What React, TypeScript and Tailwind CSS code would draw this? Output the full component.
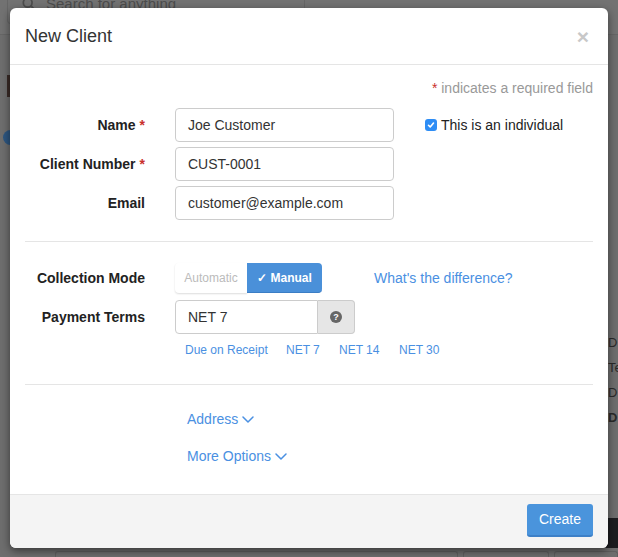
import React from "react";

function Chevron() {
  return (
    <svg className="ml-[4px] mt-[1px] h-[7px] w-[12px]" viewBox="0 0 12 7" fill="none" stroke="currentColor" strokeWidth={1.5}>
      <path strokeLinecap="round" strokeLinejoin="round" d="M1 1l5 5 5-5" />
    </svg>
  );
}

function Label({ text, required = false }: { text: string; required?: boolean }) {
  return (
    <div className="w-[120px] shrink-0 text-right text-[14px] font-bold text-[#222]">
      {text}
      {required && <span className="ml-[4px] text-[#c9302c]">*</span>}
    </div>
  );
}

function TextInput({ value }: { value: string }) {
  return (
    <div className="ml-[30px] flex h-[34px] w-[219px] items-center rounded-[4px] border border-[#ccc] bg-white pl-[12px] text-[14px] text-[#333]">
      {value}
    </div>
  );
}

export default function App() {
  return (
    <div className="relative h-[557px] w-[618px] overflow-hidden bg-[#6e6e6e] font-['Liberation_Sans',Arial,sans-serif]">
      {/* dimmed page behind the modal */}
      <div className="flex h-[35px] items-start border-b border-[#666] bg-[#727272] pl-[7px]">
        <div className="flex h-[24px] w-[298px] items-start rounded-b-[4px] border border-t-0 border-[#666] pl-[14px] text-[15px] text-[#4c4c4c]">
          <div className="-mt-[5px] flex items-center gap-[10px] leading-[18px]">
            <svg className="h-[14px] w-[14px]" viewBox="0 0 16 16" fill="none" stroke="currentColor" strokeWidth={2}>
              <circle cx="6.5" cy="6.5" r="5" />
              <path d="M10.5 10.5l4 4" strokeLinecap="round" />
            </svg>
            Search for anything
          </div>
        </div>
      </div>
      <div className="flex">
        <div className="w-[10px]">
          <div className="mt-[40px] h-[22px] w-[3px] translate-x-[7px] bg-[#3a2b27]" />
          <div className="mt-[33px] h-[15px] w-[15px] translate-x-[3px] rounded-full bg-[#2d5680]" />
        </div>
        <div className="ml-auto w-[10px] pt-[295px] text-[13px] leading-[25px] text-[#2a2a2a]">
          <div>D</div>
          <div>Te</div>
          <div>D</div>
          <div className="font-bold">D</div>
        </div>
      </div>
      <div className="absolute bottom-0 left-0 flex h-[6px] w-full gap-[5px] pl-[55px]">
        <div className="w-[403px] rounded-t-[3px] border border-b-0 border-[#5f5f5f]" />
        <div className="w-[86px] rounded-t-[3px] border border-b-0 border-[#5f5f5f]" />
        <div className="flex-1 rounded-t-[3px] border border-b-0 border-[#5f5f5f]" />
      </div>
      <div className="absolute right-0 top-[518px] h-[30px] w-[12px] bg-[#1c1d20]" />

      {/* modal */}
      <div className="absolute left-[10px] top-[8px] w-[598px] overflow-hidden rounded-[6px] bg-white shadow-[0_3px_9px_rgba(0,0,0,0.5)]">
        <div className="flex h-[57px] items-center justify-between border-b border-[#e5e5e5] pl-[15px] pr-[19px]">
          <div className="text-[18px] text-[#333]">New Client</div>
          <div className="text-[21px] font-bold leading-none text-[#c8c8c8]">×</div>
        </div>

        <div className="px-[15px]">
          <div className="pt-[13px] text-right text-[14px] leading-[20px] text-[#999]">
            <span className="text-[#c9302c]">*</span> indicates a required field
          </div>

          <div className="mt-[10px] flex">
            <div className="flex flex-col gap-[5px]">
              <div className="flex items-center">
                <Label text="Name" required />
                <TextInput value="Joe Customer" />
              </div>
              <div className="flex items-center">
                <Label text="Client Number" required />
                <TextInput value="CUST-0001" />
              </div>
              <div className="flex items-center">
                <Label text="Email" />
                <TextInput value="customer@example.com" />
              </div>
            </div>
            <div className="ml-[31px] mt-[9px] flex h-[16px] items-center gap-[4px] text-[14px] text-[#222]">
              <span className="flex h-[12px] w-[12px] items-center justify-center rounded-[3px] bg-[#2e8df5]">
                <svg className="h-[8px] w-[8px]" viewBox="0 0 8 8" fill="none" stroke="white" strokeWidth={1.6}>
                  <path strokeLinecap="round" strokeLinejoin="round" d="M1.5 4.3l1.7 1.7L6.5 2" />
                </svg>
              </span>
              This is an individual
            </div>
          </div>

          <div className="mt-[21px] h-px bg-[#e5e5e5]" />

          <div className="mt-[21px] flex items-center">
            <Label text="Collection Mode" />
            <div className="ml-[30px] flex h-[30px] text-[12px]">
              <div className="flex w-[72px] items-center justify-center rounded-l-[4px] bg-white text-[#bbb] shadow-[0_1px_2px_rgba(0,0,0,0.14)]">
                Automatic
              </div>
              <div className="flex w-[75px] items-center justify-center rounded-r-[4px] border-b border-[#3b7dc4] bg-[#4a90d9] font-bold text-white">
                ✓ Manual
              </div>
            </div>
            <div className="ml-[52px] text-[14px] text-[#4a90e2]">What's the difference?</div>
          </div>

          <div className="mt-[7px] flex items-center">
            <Label text="Payment Terms" />
            <div className="ml-[30px] flex h-[34px]">
              <div className="flex w-[143px] items-center rounded-l-[4px] border border-[#ccc] pl-[12px] text-[14px] text-[#333]">
                NET 7
              </div>
              <div className="flex w-[37px] items-center justify-center rounded-r-[4px] border border-l-0 border-[#ccc] bg-[#e6e6e6]">
                <span className="flex h-[12px] w-[12px] items-center justify-center rounded-full bg-[#666] text-[9px] font-bold leading-none text-white">
                  ?
                </span>
              </div>
            </div>
          </div>

          <div className="mt-[7px] flex pl-[160px] text-[12px] leading-[18px] text-[#4a90e2]">
            <span className="w-[101px]">Due on Receipt</span>
            <span className="w-[53px]">NET 7</span>
            <span className="w-[60px]">NET 14</span>
            <span>NET 30</span>
          </div>

          <div className="mt-[25px] h-px bg-[#e5e5e5]" />

          <div className="flex flex-col gap-[17px] pb-[28px] pl-[162px] pt-[24px] text-[14px] leading-[20px] text-[#4a90e2]">
            <div className="flex items-center">
              Address
              <Chevron />
            </div>
            <div className="flex items-center">
              More Options
              <Chevron />
            </div>
          </div>
        </div>

        <div className="flex h-[54px] items-start justify-end border-t border-[#e5e5e5] bg-[#f4f4f4] pr-[15px] pt-[9px]">
          <button className="h-[33px] w-[66px] rounded-[3px] border-b-2 border-[#3d80c7] bg-[#4a94dc] text-[14px] text-white">
            Create
          </button>
        </div>
      </div>
    </div>
  );
}
